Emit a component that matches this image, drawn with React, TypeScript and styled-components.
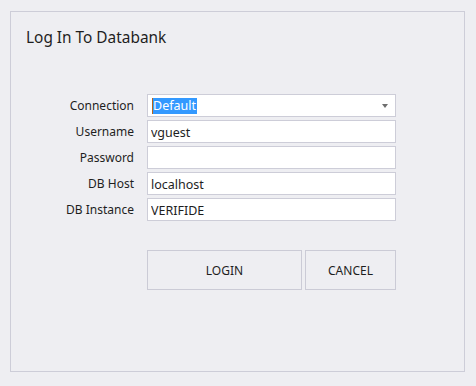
import styled, { createGlobalStyle } from 'styled-components'

const GlobalStyle = createGlobalStyle`
  html, body {
    margin: 0;
    padding: 0;
    background: #eeeef2;
  }
  body {
    font-family: "Noto Sans", "Open Sans", sans-serif;
    color: #1e1e1e;
  }
`

const Panel = styled.div`
  box-sizing: border-box;
  margin: 11px 0 0 10px;
  width: 455px;
  height: 361px;
  border: 1px solid #cdcdd8;
  display: flex;
  flex-direction: column;
`

const Title = styled.h1`
  margin: 16px 0 0 15px;
  font-size: 15.4px;
  font-weight: 400;
  line-height: 20px;
  color: #1e1e1e;
`

const Form = styled.div`
  display: grid;
  grid-template-columns: 123px 249px;
  grid-auto-rows: 23px;
  column-gap: 13px;
  row-gap: 3px;
  margin-top: 46px;
`

const Label = styled.label`
  font-size: 12px;
  line-height: 24px;
  text-align: right;
  color: #1e1e1e;
  white-space: nowrap;
`

const Field = styled.input`
  box-sizing: border-box;
  width: 100%;
  height: 23px;
  margin: 0;
  padding: 1px 3px 0;
  border: 1px solid #cdcdd8;
  background: #ffffff;
  font-family: "Noto Sans", "Open Sans", sans-serif;
  font-size: 12.5px;
  color: #1e1e1e;
  outline: none;
`

const Combo = styled.div`
  box-sizing: border-box;
  height: 23px;
  padding: 0 3px 0 4px;
  border: 1px solid #cdcdd8;
  background: #ffffff;
  display: flex;
  align-items: center;
  justify-content: space-between;
`

const Selected = styled.span`
  background: #3399ff;
  color: #ffffff;
  font-size: 12.5px;
  line-height: 16px;
  padding: 0 1px 0 0;
  border-left: 1px solid #b5651d;
`

const Arrow = styled.span`
  width: 0;
  height: 0;
  margin-right: 4px;
  border-left: 3px solid transparent;
  border-right: 3px solid transparent;
  border-top: 4px solid #6e6e6e;
`

const Actions = styled.div`
  display: flex;
  gap: 3px;
  margin: 29px 0 0 136px;
`

const Button = styled.button<{ $width: number }>`
  box-sizing: border-box;
  width: ${p => p.$width}px;
  height: 40px;
  margin: 0;
  border: 1px solid #cbcbd6;
  background: #eeeef2;
  font-family: "Noto Sans", "Open Sans", sans-serif;
  font-size: 12px;
  color: #1e1e1e;
  cursor: pointer;
`

const fields = [
  { label: 'Username', value: 'vguest' },
  { label: 'Password', value: '' },
  { label: 'DB Host', value: 'localhost' },
  { label: 'DB Instance', value: 'VERIFIDE' },
]

export default function App () {
  return (
    <>
      <GlobalStyle />
      <Panel>
        <Title>Log In To Databank</Title>
        <Form>
          <Label>Connection</Label>
          <Combo>
            <Selected>Default</Selected>
            <Arrow />
          </Combo>
          {fields.map(f => (
            <FieldRow key={f.label} label={f.label} value={f.value} />
          ))}
        </Form>
        <Actions>
          <Button $width={155}>LOGIN</Button>
          <Button $width={91}>CANCEL</Button>
        </Actions>
      </Panel>
    </>
  )
}

function FieldRow ({ label, value }: { label: string, value: string }) {
  return (
    <>
      <Label>{label}</Label>
      <Field readOnly value={value} type={label === 'Password' ? 'password' : 'text'} />
    </>
  )
}
